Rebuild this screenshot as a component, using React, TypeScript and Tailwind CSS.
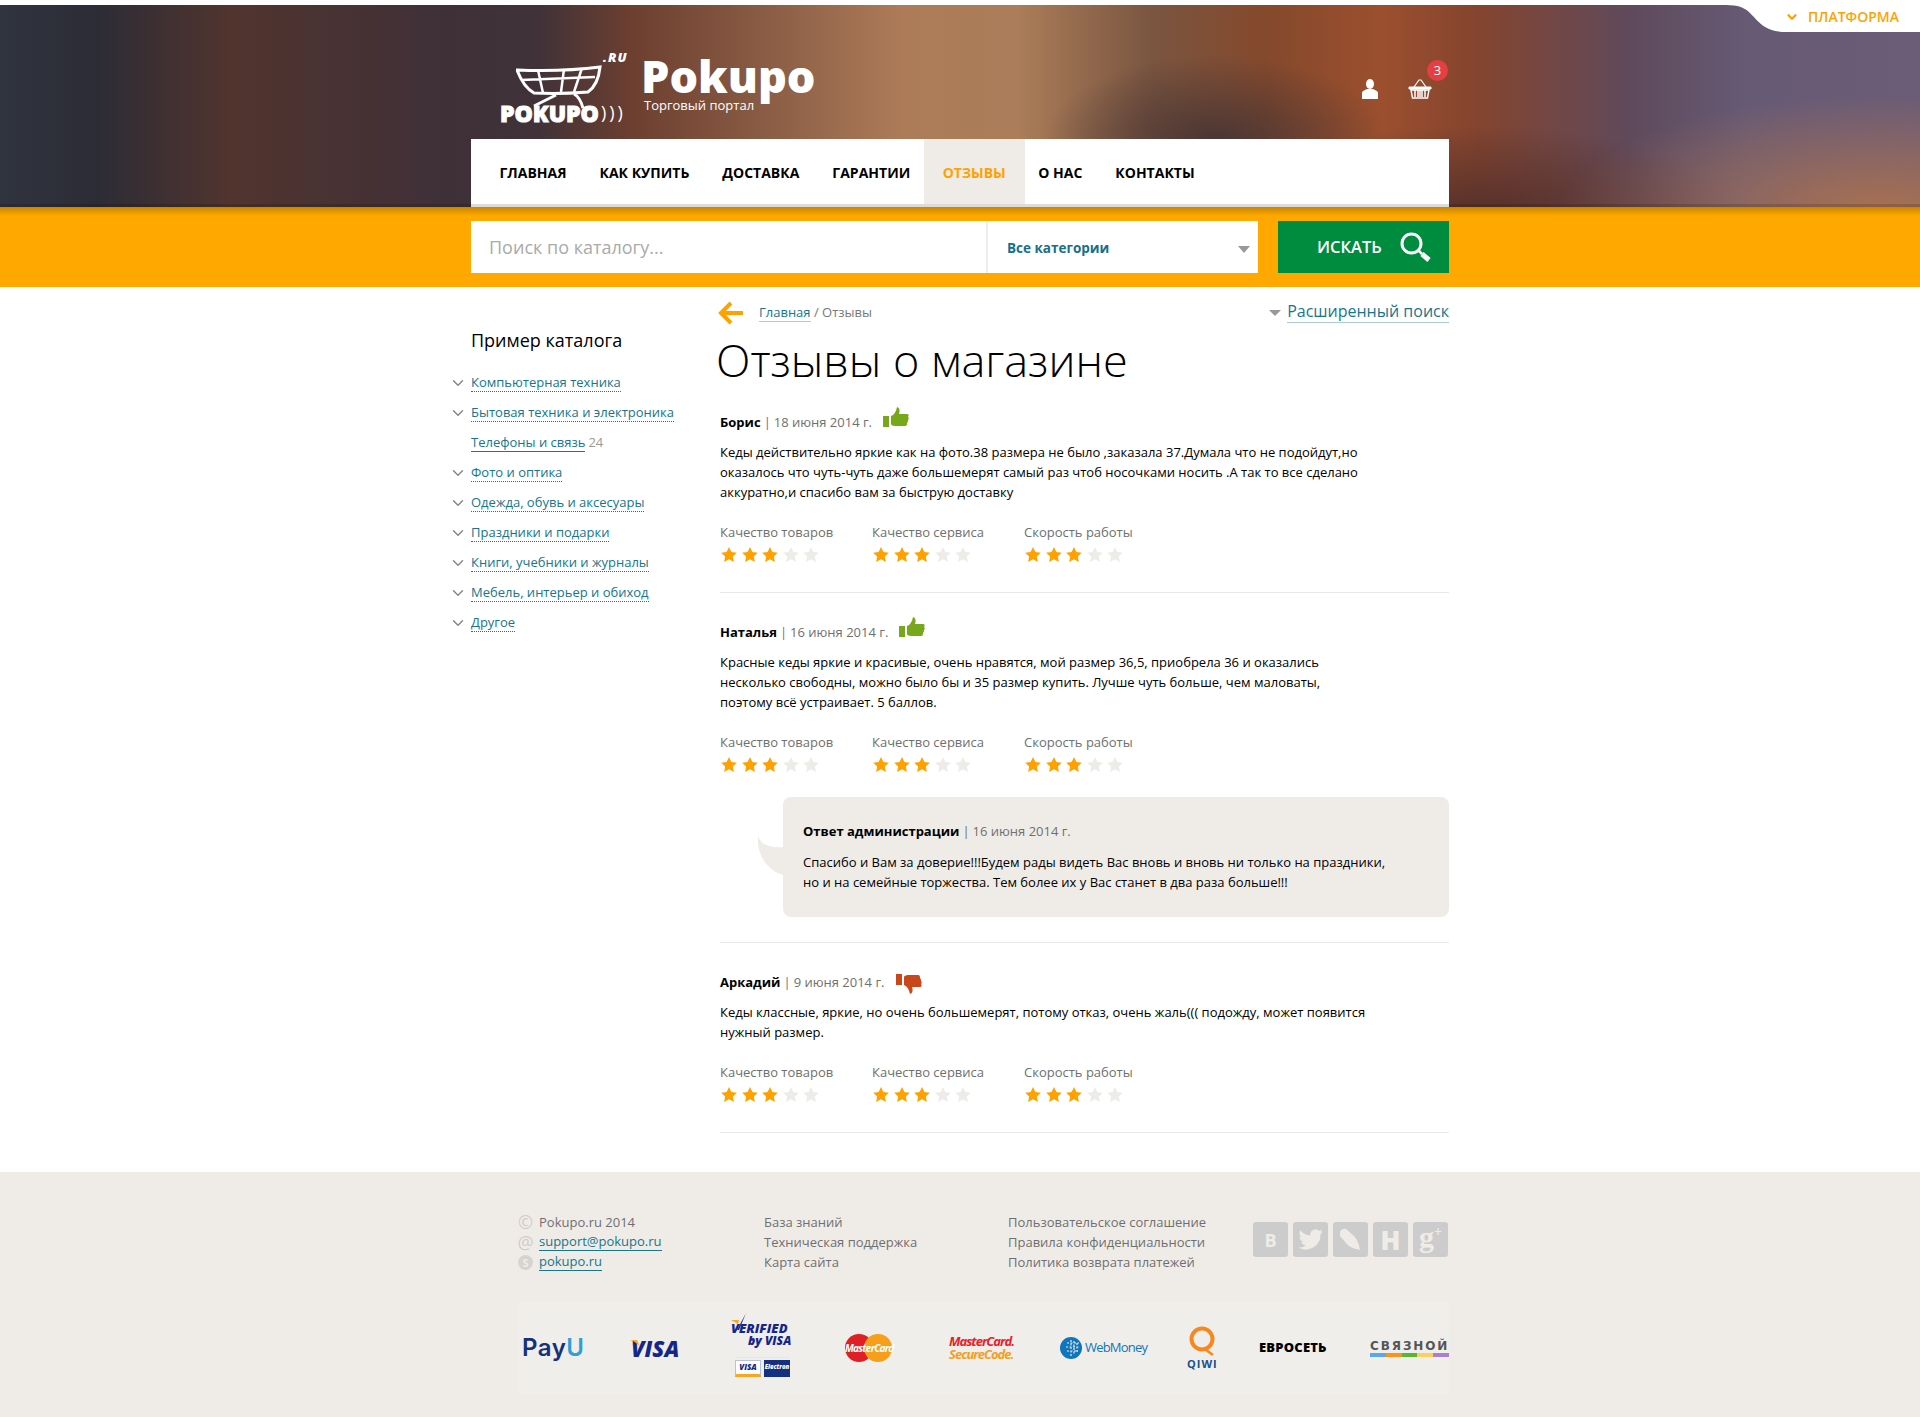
import React from "react";
import { ChevronDown } from "lucide-react";

const nav = ["Главная", "Как купить", "Доставка", "Гарантии", "Отзывы", "О нас", "Контакты"];
const catalog = [
  "Компьютерная техника",
  "Бытовая техника и электроника",
  "Телефоны и связь",
  "Фото и оптика",
  "Одежда, обувь и аксесуары",
  "Праздники и подарки",
  "Книги, учебники и журналы",
  "Мебель, интерьер и обиход",
  "Другое",
];
const ratings = ["Качество товаров", "Качество сервиса", "Скорость работы"];

const Star = ({ on }: { on: boolean }) => (
  <svg width="16" height="15" viewBox="0 0 24 23" className={on ? "fill-[#ffa200]" : "fill-[#eeece9]"}>
    <path d="M12 0l3.7 7.7 8.3 1.1-6.1 5.8 1.6 8.4L12 18.9l-7.5 4.1 1.6-8.4L0 8.8l8.3-1.1z" />
  </svg>
);

const Ratings = () => (
  <div className="flex mt-[20px]">
    {ratings.map((r) => (
      <div key={r} className="w-[152px]">
        <div className="text-[13px] leading-[20px] text-[#6f6f6f]">{r}</div>
        <div className="flex gap-[4.6px] mt-[5px] pl-[1px]">
          {[1, 2, 3, 4, 5].map((i) => (
            <Star key={i} on={i <= 3} />
          ))}
        </div>
      </div>
    ))}
  </div>
);

const Thumb = ({ down }: { down?: boolean }) => (
  <svg
    width="26"
    height="20"
    viewBox="0 0 26 20"
    className={
      down
        ? "fill-[#c8481c] rotate-180 scale-x-[-1] ml-[12px] translate-y-[1px]"
        : "fill-[#77a81c] ml-[11px] -translate-y-[6px]"
    }
  >
    <rect x="0" y="9" width="6" height="11" />
    <path d="M8 9c3-1 5-4 6-9 3 1 3 4 2 7h8c2 0 2 2 1 3 1 1 1 2 0 3 0 1 0 2-1 3 0 1 0 3-2 3H12c-2 0-4-1-4-2z" />
  </svg>
);

const Head = ({ name, date, down }: { name: string; date: string; down?: boolean }) => (
  <div className="flex items-center h-[20px] pt-[2px] text-[13px] text-[#6f6f6f]">
    <b className="font-bold text-black">{name}</b>
    <span className="mx-[3px]">|</span>
    <span>{date}</span>
    <Thumb down={down} />
  </div>
);

const Social = ({ children }: { children: React.ReactNode }) => (
  <div className="w-[35px] h-[35px] rounded-[3px] bg-[#cccccc] flex items-center justify-center text-[#efece8]">
    {children}
  </div>
);

const FootIcon = ({ children }: { children: React.ReactNode }) => (
  <span className="w-[15px] h-[15px] mr-[6px] rounded-full flex items-center justify-center text-[18px] leading-none text-[#cfcdca]">
    {children}
  </span>
);

const App = () => {
  return (
    <div className="w-[1920px] bg-white text-black font-['Open_Sans',sans-serif]">
      <div className="relative h-[202px] mt-[5px] bg-[linear-gradient(180deg,transparent_199px,rgba(0,0,0,0.15)_199px),radial-gradient(ellipse_320px_120px_at_1880px_210px,#ab7150,transparent),radial-gradient(ellipse_170px_85px_at_1215px_135px,#4a3634,transparent),radial-gradient(ellipse_260px_90px_at_1480px_210px,#55302a,transparent),linear-gradient(90deg,#30343f_0%,#2c2c36_5%,#51342e_12%,#3f3038_23%,#403238_28%,#6d3f30_33%,#8a5d45_40%,#ad7b58_47%,#ab7d59_53%,#7a5540_60%,#85492c_66%,#9b4f2e_72%,#84442f_77%,#5f4a5c_85%,#675a75_91%,#6b5c77_100%)]">
        <div className="absolute right-0 -top-[5px] w-[198px] h-[32px] flex items-center">
          <svg width="65" height="32" viewBox="0 0 65 32" className="fill-white shrink-0">
            <path d="M0 5c12 0 20 0 28 8 10 10 15 19 37 19V0H0z" />
          </svg>
          <div className="flex-1 h-full bg-white flex items-center pt-[1px] text-[14px] font-semibold text-[#ffa200]">
            <ChevronDown size={14} strokeWidth={4} className="-ml-[2px] mr-[9px]" />
            ПЛАТФОРМА
          </div>
        </div>

        <div className="w-[978px] mx-auto h-full flex flex-col">
          <div className="relative flex-1 flex items-start">
            <div className="relative w-[135px] h-[80px] ml-[29px] mt-[48px] text-white shrink-0">
              <svg width="90" height="50" viewBox="0 0 90 50" className="absolute left-[16px] top-[11px]" fill="none" stroke="white" strokeWidth="3">
                <path d="M1 6c25 1 60 0 83-3-1 10-5 20-12 25-12 1-35 2-54 1C9 24 4 14 1 6z" />
                <path d="M5 16l74-3M22 6l5 23M48 5l-3 23M66 4l-8 24" strokeWidth="2.5" />
                <path d="M40 31L18 42M58 30c4 2 7 7 9 14" strokeWidth="3" />
              </svg>
              <span className="absolute left-[103px] -top-[2px] text-[13px] leading-none font-extrabold italic tracking-[1px]">.RU</span>
              <span className="absolute left-0 top-[47px] text-[23px] leading-[26px] font-extrabold tracking-[0px] [-webkit-text-stroke:1px_white]">POKUPO</span>
              <span className="absolute left-[101px] top-[50px] text-[18px] leading-none tracking-[3px]">{")))"}</span>
            </div>
            <div className="ml-[6px] mt-[43px] text-white">
              <div className="text-[45px] leading-[56px] font-extrabold">Pokupo</div>
              <div className="text-[13px] leading-[14px] -mt-[6px] ml-[3px]">Торговый портал</div>
            </div>
            <div className="ml-auto flex mt-[74px] mr-[17px] relative">
              <svg width="16" height="20" viewBox="0 0 16 20" className="fill-white">
                <ellipse cx="8" cy="5" rx="4" ry="5" />
                <path d="M0 20v-6c0-2 3-3 5-4h6c2 1 5 2 5 4v6z" />
              </svg>
              <svg width="24" height="20" viewBox="0 0 24 20" fill="none" stroke="white" className="ml-[30px]">
                <path d="M6 8l5-7h2l5 7" strokeWidth="1.2" />
                <path d="M1 8h22v2H1z" fill="white" />
                <path d="M3 11l1.5 8h15L21 11z" strokeWidth="1.4" />
                <path d="M7 11v7M10 11v7M12 11v7M14 11v7M17 11v7" strokeWidth="1.5" />
              </svg>
              <span className="absolute -right-[16px] -top-[19px] w-[21px] h-[21px] rounded-full bg-[#e63e45] text-white text-[13px] leading-[21px] text-center">3</span>
            </div>
          </div>
          <nav className="h-[68px] bg-white border-b-[3px] border-[#dcdcdc] flex pl-[12px] shrink-0">
            {nav.map((n) => (
              <a
                key={n}
                className={
                  n === "Отзывы"
                    ? "-mx-[3px] px-[19px] h-[65px] bg-[#efece8] text-[#ffa200] text-[14px] font-bold uppercase leading-[68px]"
                    : "px-[16.5px] h-[65px] text-[14px] font-bold uppercase leading-[68px]"
                }
              >
                {n}
              </a>
            ))}
          </nav>
        </div>
      </div>

      <div className="h-[80px] bg-[#ffa900] bg-[linear-gradient(180deg,#c98500_0px,#ffa900_9px)] pt-[14px]">
        <div className="w-[978px] mx-auto flex h-[52px]">
          <div className="w-[515px] bg-white pl-[18px] text-[18px] leading-[52px] text-[#aaaaaa]">Поиск по каталогу...</div>
          <div className="w-[272px] bg-white border-l-[2px] border-[#eeeeee] pl-[19px] pt-[2px] flex items-center relative text-[13.5px] font-bold text-[#17708a]">
            Все категории
            <span className="ml-auto mr-[8px] mt-[3px] border-x-[6px] border-x-transparent border-t-[7px] border-t-[#999999]" />
          </div>
          <div className="w-[171px] ml-[20px] bg-[#008c3f] flex items-center pl-[39px] text-white text-[16.5px] font-semibold">
            ИСКАТЬ
            <svg width="32" height="30" viewBox="0 0 32 30" fill="none" stroke="white" className="ml-[18px]">
              <circle cx="11.5" cy="11.5" r="9.5" strokeWidth="3" />
              <path d="M18 18l4 4" strokeWidth="2.5" />
              <path d="M22 22l7 6" strokeWidth="5" />
            </svg>
          </div>
        </div>
      </div>

      <div className="w-[978px] mx-auto flex">
        <aside className="w-[249px] shrink-0 pt-[39px]">
          <h3 className="text-[18px] leading-[28px] font-normal">Пример каталога</h3>
          <ul className="mt-[14px]">
            {catalog.map((c) => (
              <li key={c} className="relative h-[30px] flex items-center text-[13px] text-[#15768d]">
                {c === "Телефоны и связь" ? (
                  <>
                    <span className="border-b border-[#15768d] leading-[17px]">{c}</span>
                    <span className="ml-[3px] text-[#999999]">24</span>
                  </>
                ) : (
                  <>
                    <ChevronDown size={18} strokeWidth={2} className="absolute -left-[22px] top-[6px] text-[#888888]" />
                    <span className="border-b border-dotted border-[#15768d] leading-[17px]">{c}</span>
                  </>
                )}
              </li>
            ))}
          </ul>
        </aside>

        <main className="w-[729px] pt-[13px] pb-[39px]">
          <div className="flex items-center h-[26px]">
            <svg width="26" height="24" viewBox="0 0 26 24" fill="none" stroke="#ffa200" strokeWidth="4" className="-ml-[2px]">
              <path d="M25 12H4M13 2L3 12l10 10" />
            </svg>
            <span className="ml-[15px] text-[13px] text-[#777777]">
              <a className="text-[#15768d] border-b border-[#a9cdd6]">Главная</a> / Отзывы
            </span>
            <span className="ml-auto -mt-[2px] flex items-center text-[16px] text-[#15768d]">
              <span className="mr-[6px] mt-[2px] border-x-[6px] border-x-transparent border-t-[6px] border-t-[#999999]" />
              <span className="border-b border-[#a9cdd6] leading-[21px]">Расширенный поиск</span>
            </span>
          </div>
          <h1 className="text-[45px] leading-[60px] font-light -ml-[4px] mt-[4px]">Отзывы о магазине</h1>

          <section className="mt-[22px] pb-[30px] border-b border-[#e8e8e8]">
            <Head name="Борис" date="18 июня 2014 г." />
            <p className="text-[13px] leading-[20px] mt-[10px] w-[660px]">
              Кеды действительно яркие как на фото.38 размера не было ,заказала 37.Думала что не подойдут,но оказалось что чуть-чуть даже большемерят самый раз чтоб носочками носить .А так то все сделано аккуратно,и спасибо вам за быструю доставку
            </p>
            <Ratings />
          </section>

          <section className="mt-[29px] pb-[25px] border-b border-[#e8e8e8]">
            <Head name="Наталья" date="16 июня 2014 г." />
            <p className="text-[13px] leading-[20px] mt-[10px] w-[620px]">
              Красные кеды яркие и красивые, очень нравятся, мой размер 36,5, приобрела 36 и оказались несколько свободны, можно было бы и 35 размер купить. Лучше чуть больше, чем маловаты, поэтому всё устраивает. 5 баллов.
            </p>
            <Ratings />
            <div className="relative mt-[25px] ml-[63px] h-[120px] rounded-[8px] bg-[#efece8] pt-[25px] pl-[20px]">
              <svg width="25" height="40" viewBox="0 0 25 40" className="absolute -left-[25px] top-[38px] fill-[#efece8]">
                <path d="M0 0C2 10 12 13 25 12V40C10 36-2 20 0 0z" />
              </svg>
              <div className="h-[20px] text-[13px] text-[#6f6f6f]">
                <b className="font-bold text-black">Ответ администрации</b>
                <span className="mx-[3px]">|</span>16 июня 2014 г.
              </div>
              <p className="text-[13px] leading-[20px] mt-[10px] w-[600px]">
                Спасибо и Вам за доверие!!!Будем рады видеть Вас вновь и вновь ни только на праздники, но и на семейные торжества. Тем более их у Вас станет в два раза больше!!!
              </p>
            </div>
          </section>

          <section className="mt-[29px] pb-[30px] border-b border-[#e8e8e8]">
            <Head name="Аркадий" date="9 июня 2014 г." down />
            <p className="text-[13px] leading-[20px] mt-[10px] w-[660px]">
              Кеды классные, яркие, но очень большемерят, потому отказ, очень жаль((( подожду, может появится нужный размер.
            </p>
            <Ratings />
          </section>
        </main>
      </div>

      <footer className="h-[245px] bg-[#efece8] pt-[40px]">
        <div className="w-[931px] ml-[518px] flex h-[90px] text-[13px] leading-[20px] text-[#6f6f6f]">
          <div className="w-[246px]">
            <div className="flex items-center h-[20px]"><FootIcon>©</FootIcon>Pokupo.ru 2014</div>
            <div className="flex items-center h-[20px]"><FootIcon>@</FootIcon><a className="text-[#15768d] border-b border-[#15768d] leading-[17px]">support@pokupo.ru</a></div>
            <div className="flex items-center h-[20px]"><FootIcon><span className="w-[15px] h-[15px] rounded-full bg-[#d6d4d1] text-[#efece8] text-[11px] font-bold text-center leading-[15px]">S</span></FootIcon><a className="text-[#15768d] border-b border-[#15768d] leading-[17px]">pokupo.ru</a></div>
          </div>
          <div className="w-[244px]">
            <div>База знаний</div>
            <div>Техническая поддержка</div>
            <div>Карта сайта</div>
          </div>
          <div className="w-[245px]">
            <div>Пользовательское соглашение</div>
            <div>Правила конфиденциальности</div>
            <div>Политика возврата платежей</div>
          </div>
          <div className="flex gap-[5px] h-[35px] mt-[10px]">
            <Social><span className="text-[18px] font-bold">В</span></Social>
            <Social>
              <svg width="25" height="21" viewBox="0 0 24 20" fill="#efece8"><path d="M24 2.4c-.9.4-1.8.7-2.8.8 1-.6 1.8-1.6 2.2-2.7-1 .6-2 1-3.1 1.2A4.9 4.9 0 0 0 12 6.200C8 6 4.400 4.100 2 1.100 .7 3.300 1.300 6.200 3.500 7.700c-.8 0-1.600-.2-2.200-.6 0 2.400 1.700 4.400 3.900 4.900-.7.200-1.500.200-2.200.100.6 2 2.400 3.400 4.600 3.400A9.900 9.900 0 0 1 0 17.500 14 14 0 0 0 21.500 5c1-.7 1.800-1.600 2.500-2.600z" /></svg>
            </Social>
            <Social>
              <svg width="24" height="28" viewBox="0 0 24 28" fill="#efece8"><path d="M1 7c0-3 3-5 6-4l8 7c3 3 5 8 6 14-5-1-11-3-14-7L1 10z" /></svg>
            </Social>
            <Social><span className="text-[26px] leading-none font-extrabold">Н</span></Social>
            <Social><span className="text-[30px] leading-[30px] font-bold font-['Liberation_Serif',serif] -mt-[6px]">g<span className="text-[14px] align-super leading-none">+</span></span></Social>
          </div>
        </div>

        <div className="w-[931px] ml-[518px] h-[92px] bg-[#f0eeea] flex items-center">
          <span className="ml-[4px] w-[109px] shrink-0 text-[#16307a] text-[24px] font-['Inter',sans-serif] font-semibold tracking-[0.5px] leading-none">
            Pay<span className="text-[#2f9fd8]">U</span>
          </span>
          <span className="relative w-[100px] shrink-0 text-[#15268a] text-[22px] leading-none font-extrabold italic">
            <svg width="10" height="7" viewBox="0 0 10 7" className="absolute -left-[1px] top-[3px] fill-[#f7a823]">
              <path d="M0 0h7l3 7C8 4 4 1 0 0z" />
            </svg>
            VISA
          </span>
          <div className="relative w-[114px] shrink-0 flex flex-col items-start text-[#15268a] font-extrabold italic leading-none">
            <svg width="20" height="18" viewBox="0 0 20 18" className="absolute left-0 -top-[7px]">
              <path d="M0 7h8l-1 4z" fill="#f7a823" />
              <path d="M6 17L15 0 8 17z" fill="#15268a" />
            </svg>
            <span className="text-[13px] mt-[2px]">VERIFIED</span>
            <span className="text-[12px] ml-[17px]">by VISA</span>
            <div className="flex gap-[3px] mt-[10px] ml-[4px] pt-[2px] border-t border-[#e9e6e2]">
              <span className="w-[26px] h-[17px] bg-white border border-[#b9c2d8] border-b-[3px] border-b-[#f7a823] text-[8px] text-center leading-[11px]">VISA</span>
              <span className="w-[26px] h-[17px] bg-[#15307f] text-white text-[6px] text-center leading-[15px]">Electron</span>
            </div>
          </div>
          <div className="relative w-[104px] shrink-0 h-[28px]">
            <span className="absolute left-[0px] w-[28px] h-[28px] rounded-full bg-[#de1f26]" />
            <span className="absolute left-[19px] w-[28px] h-[28px] rounded-full bg-[#f79e1b]" />
            <span className="absolute left-0 w-[47px] text-center text-white text-[10px] leading-[28px] font-bold italic tracking-[-0.7px]">MasterCard</span>
          </div>
          <div className="w-[111px] shrink-0 text-[13px] leading-[13px] font-bold italic tracking-[-1px]">
            <div className="text-[#e8202a]">MasterCard.</div>
            <div className="text-[#f79e1b]">SecureCode.</div>
          </div>
          <div className="w-[127px] shrink-0 flex items-center">
            <svg width="22" height="22" viewBox="0 0 22 22">
              <circle cx="11" cy="11" r="11" fill="#0f75bc" />
              <path d="M11 3v16M14 4v14M17 6v10M7 6h12M6 10h14M7 14h11" stroke="#efece8" strokeWidth="1.200" strokeDasharray="2 1.500" />
            </svg>
            <span className="ml-[3px] text-[#0f75bc] text-[13px] tracking-[-0.8px]">WebMoney</span>
          </div>
          <div className="w-[72px] shrink-0 flex flex-col items-start">
            <svg width="28" height="32" viewBox="0 0 28 32" fill="none" stroke="#f7881f" className="ml-[1px]">
              <circle cx="14" cy="13" r="10.500" strokeWidth="4" />
              <path d="M16 22c3 3 6 5 9 7" strokeWidth="2.500" />
            </svg>
            <span className="text-[#15508f] text-[11px] leading-[12px] font-bold tracking-[1px]">QIWI</span>
          </div>
          <span className="w-[111px] shrink-0 text-[13px] font-extrabold text-black tracking-[0.2px]">ЕВРОСЕТЬ</span>
          <div className="w-[79px] shrink-0">
            <div className="text-[12px] leading-[12px] font-bold font-['DejaVu_Sans',sans-serif] text-[#555555] tracking-[1.9px] whitespace-nowrap">СВЯЗНОЙ</div>
            <div className="flex h-[4px] mt-[1px]">
              <span className="flex-1 bg-[#5aa9e6]" />
              <span className="flex-1 bg-[#f7941e]" />
              <span className="flex-1 bg-[#5bb531]" />
              <span className="flex-1 bg-[#fcd15b]" />
              <span className="flex-1 bg-[#a97fd0]" />
            </div>
          </div>
        </div>
      </footer>
    </div>
  );
};

export default App;
